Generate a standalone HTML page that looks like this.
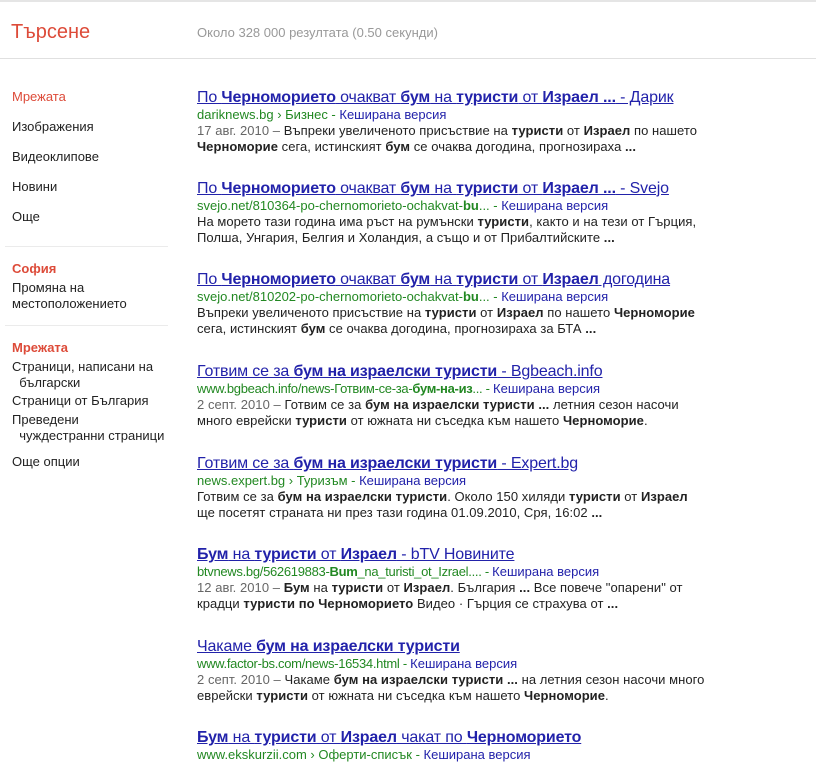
<!DOCTYPE html>
<html><head><meta charset="utf-8"><style>
body{margin:0;width:816px;height:755px;overflow:hidden;background:#fff;font-family:"Liberation Sans",Arial,sans-serif;position:relative}
.top{position:absolute;left:0;top:0;width:816px;height:2px;background:#e5e5e5}
.hdr{position:absolute;left:0;top:58px;width:816px;height:1px;background:#e0e0e0}
.logo{position:absolute;left:11px;top:21px;font-size:20px;color:#dd4b39}
.stats{position:absolute;left:197px;top:25px;font-size:13px;color:#999}
.nav{position:absolute;left:12px;font-size:13px;color:#222;white-space:nowrap;line-height:16px}
.red{color:#dd4b39}
.b{font-weight:bold}
.sep{position:absolute;left:5px;width:163px;height:1px;background:#ebebeb}
.r{position:absolute;left:197px;white-space:nowrap}
.t{font-size:16px;line-height:19px;color:#2222aa;text-decoration:underline;letter-spacing:-0.15px}
.u{font-size:13px;line-height:16px;color:#228822}
.u .c{color:#2222aa}
.s{font-size:13px;line-height:16px;color:#222;letter-spacing:0.05px}
.d{color:#666}
</style></head><body>
<div class="top"></div>
<div class="logo">Търсене</div>
<div class="stats">Около 328 000 резултата (0.50 секунди)</div>
<div class="hdr"></div>

<div class="nav red" style="top:89px">Мрежата</div>
<div class="nav" style="top:119px">Изображения</div>
<div class="nav" style="top:149px">Видеоклипове</div>
<div class="nav" style="top:179px">Новини</div>
<div class="nav" style="top:209px">Още</div>
<div class="sep" style="top:246px"></div>
<div class="nav red b" style="top:261px">София</div>
<div class="nav" style="top:280px">Промяна на<br>местоположението</div>
<div class="sep" style="top:325px"></div>
<div class="nav red b" style="top:340px">Мрежата</div>
<div class="nav" style="top:359px">Страници, написани на<br>&nbsp;&nbsp;български</div>
<div class="nav" style="top:393px">Страници от България</div>
<div class="nav" style="top:412px">Преведени<br>&nbsp;&nbsp;чуждестранни страници</div>
<div class="nav" style="top:454px">Още опции</div>

<div class="r" style="top:88px"><div class="t">По <b>Черноморието</b> очакват <b>бум</b> на <b>туристи</b> от <b>Израел ...</b> - Дарик</div>
<div class="u">dariknews.bg › Бизнес - <span class="c">Кеширана версия</span></div>
<div class="s"><span class="d">17 авг. 2010 – </span>Въпреки увеличеното присъствие на <b>туристи</b> от <b>Израел</b> по нашето<br><b>Черноморие</b> сега, истинският <b>бум</b> се очаква догодина, прогнозираха <b>...</b></div></div>

<div class="r" style="top:179px"><div class="t">По <b>Черноморието</b> очакват <b>бум</b> на <b>туристи</b> от <b>Израел ...</b> - Svejo</div>
<div class="u">svejo.net/810364-po-chernomorieto-ochakvat-<b>bu</b>... - <span class="c">Кеширана версия</span></div>
<div class="s">На морето тази година има ръст на румънски <b>туристи</b>, както и на тези от Гърция,<br>Полша, Унгария, Белгия и Холандия, а също и от Прибалтийските <b>...</b></div></div>

<div class="r" style="top:270px"><div class="t">По <b>Черноморието</b> очакват <b>бум</b> на <b>туристи</b> от <b>Израел</b> догодина</div>
<div class="u">svejo.net/810202-po-chernomorieto-ochakvat-<b>bu</b>... - <span class="c">Кеширана версия</span></div>
<div class="s">Въпреки увеличеното присъствие на <b>туристи</b> от <b>Израел</b> по нашето <b>Черноморие</b><br>сега, истинският <b>бум</b> се очаква догодина, прогнозираха за БТА <b>...</b></div></div>

<div class="r" style="top:362px"><div class="t">Готвим се за <b>бум на израелски туристи</b> - Bgbeach.info</div>
<div class="u" style="letter-spacing:-0.3px">www.bgbeach.info/news-Готвим-се-за-<b>бум-на-из</b>... - <span class="c" style="letter-spacing:0">Кеширана версия</span></div>
<div class="s"><span class="d">2 септ. 2010 – </span>Готвим се за <b>бум на израелски туристи ...</b> летния сезон насочи<br>много еврейски <b>туристи</b> от южната ни съседка към нашето <b>Черноморие</b>.</div></div>

<div class="r" style="top:454px"><div class="t">Готвим се за <b>бум на израелски туристи</b> - Expert.bg</div>
<div class="u">news.expert.bg › Туризъм - <span class="c">Кеширана версия</span></div>
<div class="s">Готвим се за <b>бум на израелски туристи</b>. Около 150 хиляди <b>туристи</b> от <b>Израел</b><br>ще посетят страната ни през тази година 01.09.2010, Сря, 16:02 <b>...</b></div></div>

<div class="r" style="top:545px"><div class="t"><b>Бум</b> на <b>туристи</b> от <b>Израел</b> - bTV Новините</div>
<div class="u" style="letter-spacing:-0.3px">btvnews.bg/562619883-<b>Bum</b>_na_turisti_ot_Izrael.... - <span class="c" style="letter-spacing:0">Кеширана версия</span></div>
<div class="s"><span class="d">12 авг. 2010 – </span><b>Бум</b> на <b>туристи</b> от <b>Израел</b>. България <b>...</b> Все повече "опарени" от<br>крадци <b>туристи по Черноморието</b> Видео · Гърция се страхува от <b>...</b></div></div>

<div class="r" style="top:637px"><div class="t">Чакаме <b>бум на израелски туристи</b></div>
<div class="u" style="letter-spacing:-0.3px">www.factor-bs.com/news-16534.html - <span class="c" style="letter-spacing:0">Кеширана версия</span></div>
<div class="s"><span class="d">2 септ. 2010 – </span>Чакаме <b>бум на израелски туристи ...</b> на летния сезон насочи много<br>еврейски <b>туристи</b> от южната ни съседка към нашето <b>Черноморие</b>.</div></div>

<div class="r" style="top:728px"><div class="t"><b>Бум</b> на <b>туристи</b> от <b>Израел</b> чакат по <b>Черноморието</b></div>
<div class="u">www.ekskurzii.com › Оферти-списък - <span class="c">Кеширана версия</span></div></div>
</body></html>
